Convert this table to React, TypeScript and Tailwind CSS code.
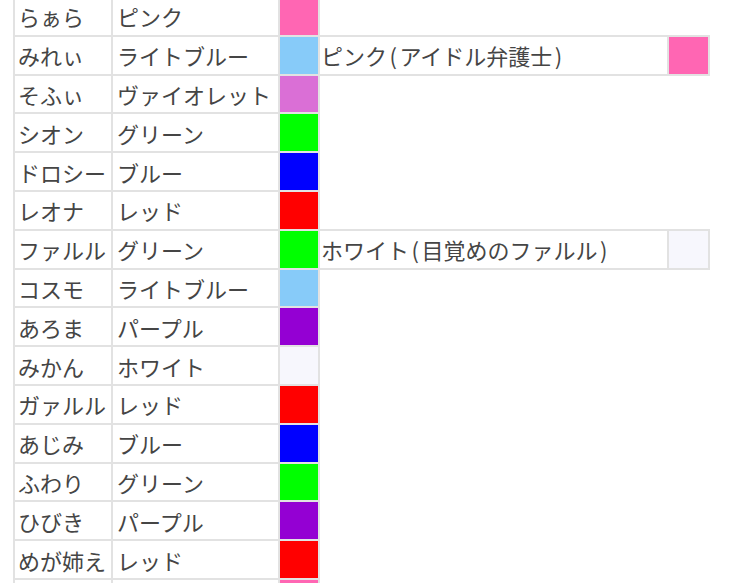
import React from "react";

type Row = { name: string; color: string; hex: string; extra?: { label: string; hex: string } };

const rows: Row[] = [
  { name: "らぁら", color: "ピンク", hex: "#ff66b3" },
  { name: "みれぃ", color: "ライトブルー", hex: "#87cbf9", extra: { label: "ピンク(アイドル弁護士)", hex: "#ff66b3" } },
  { name: "そふぃ", color: "ヴァイオレット", hex: "#da6fd6" },
  { name: "シオン", color: "グリーン", hex: "#00ff00" },
  { name: "ドロシー", color: "ブルー", hex: "#0000ff" },
  { name: "レオナ", color: "レッド", hex: "#ff0000" },
  { name: "ファルル", color: "グリーン", hex: "#00ff00", extra: { label: "ホワイト(目覚めのファルル)", hex: "#f7f7fd" } },
  { name: "コスモ", color: "ライトブルー", hex: "#87cbf9" },
  { name: "あろま", color: "パープル", hex: "#9400d3" },
  { name: "みかん", color: "ホワイト", hex: "#f7f7fd" },
  { name: "ガァルル", color: "レッド", hex: "#ff0000" },
  { name: "あじみ", color: "ブルー", hex: "#0000ff" },
  { name: "ふわり", color: "グリーン", hex: "#00ff00" },
  { name: "ひびき", color: "パープル", hex: "#9400d3" },
  { name: "めが姉え", color: "レッド", hex: "#ff0000" },
  { name: "", color: "", hex: "#ff66b3" },
];

function Label({ text }: { text: string }) {
  const parts = text.split(/([()])/);
  return (
    <>
      {parts.map((p, i) =>
        p === "(" || p === ")" ? (
          <span key={i} className="px-[2.5px]">
            {p}
          </span>
        ) : (
          <span key={i}>{p}</span>
        )
      )}
    </>
  );
}

export default function App() {
  return (
    <div
      className="w-[746px] h-[583px] overflow-hidden bg-white pl-[13px]"
      style={{ fontFamily: '"Noto Sans CJK JP", "Noto Sans", sans-serif' }}
    >
      <table className="border-collapse table-fixed mt-[-4px] text-[22px] text-[#454545] leading-none">
        <colgroup>
          <col className="w-[98px]" />
          <col className="w-[167px]" />
          <col className="w-[40px]" />
          <col className="w-[349px]" />
          <col className="w-[41px]" />
        </colgroup>
        <tbody>
          {rows.map((r, i) => (
            <tr key={i} className="h-[38.8px]">
              <td className="border-2 border-[#e2e2e2] px-[3px] whitespace-nowrap">{r.name}</td>
              <td className="border-2 border-[#e2e2e2] px-[4px] whitespace-nowrap">{r.color}</td>
              <td className="border-2 border-[#e2e2e2] p-0" style={{ backgroundColor: r.hex }}></td>
              {r.extra && (
                <>
                  <td className="border-2 border-[#e2e2e2] pl-[1px] pr-0 whitespace-nowrap">
                    <Label text={r.extra.label} />
                  </td>
                  <td className="border-2 border-[#e2e2e2] p-0" style={{ backgroundColor: r.extra.hex }}></td>
                </>
              )}
            </tr>
          ))}
        </tbody>
      </table>
    </div>
  );
}
